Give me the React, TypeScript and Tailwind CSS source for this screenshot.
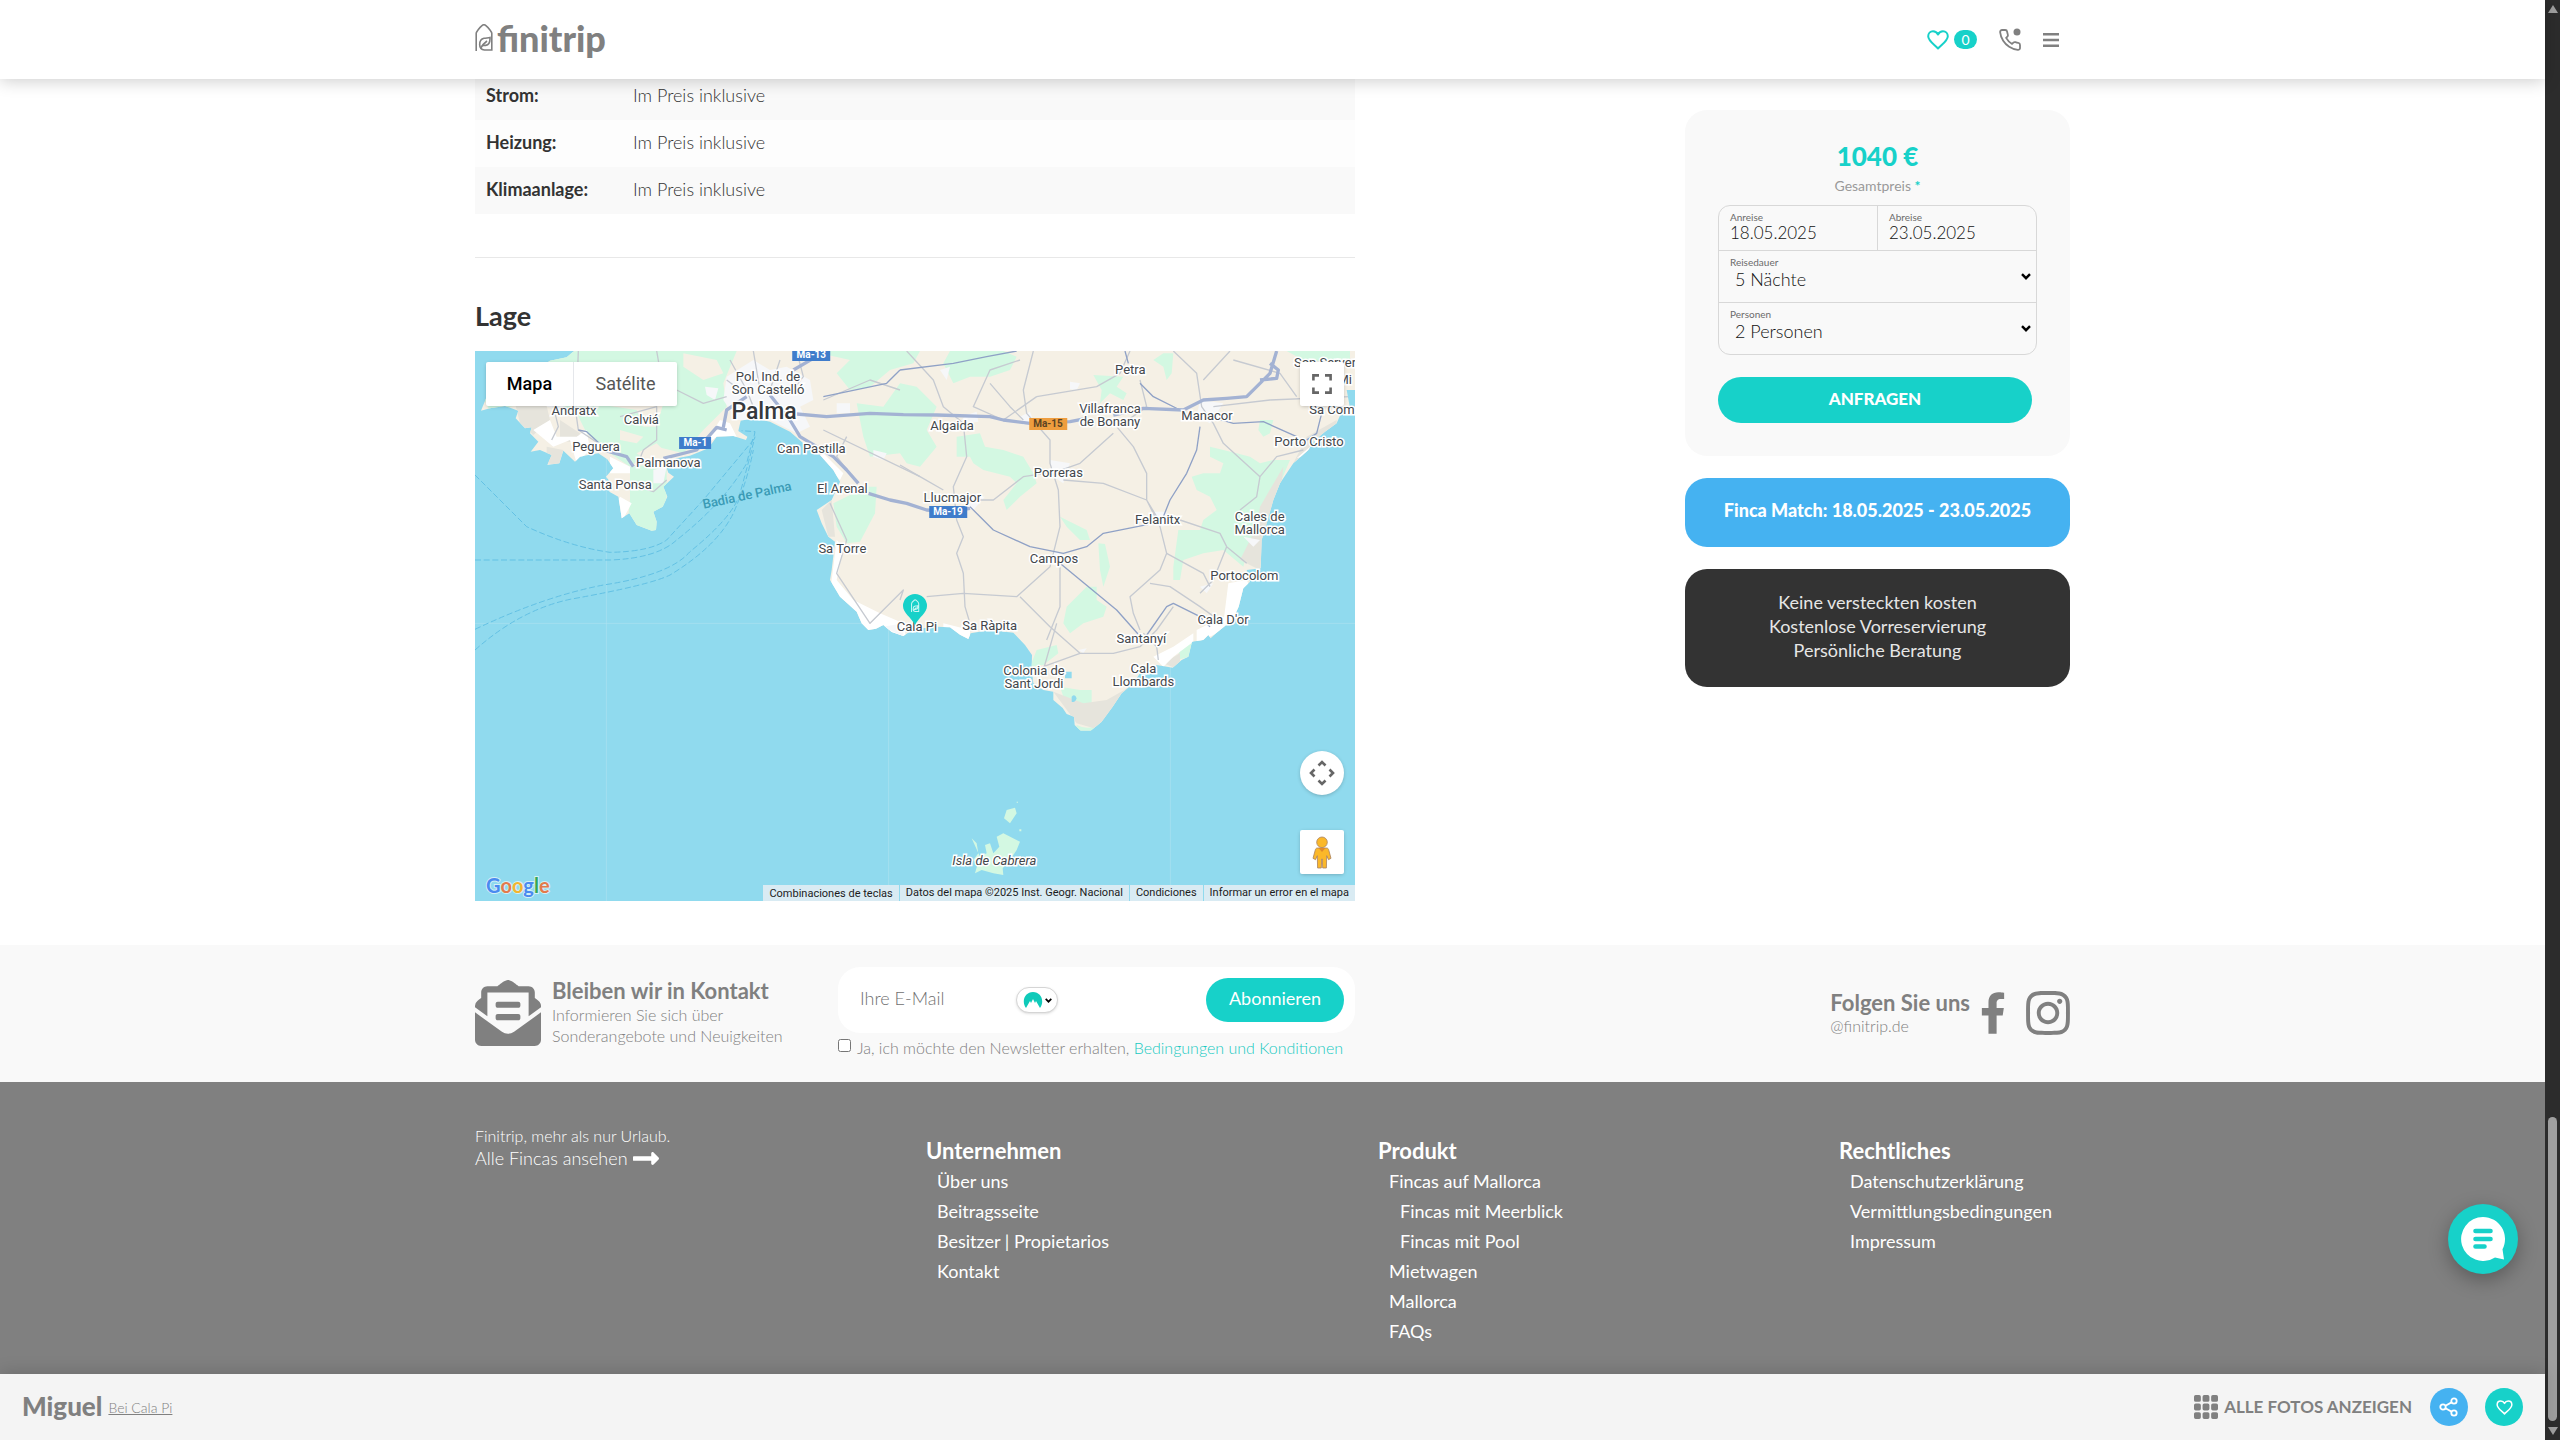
import React from "react";
import { FaEnvelopeOpenText, FaFacebookF, FaInstagram, FaLongArrowAltRight } from "react-icons/fa";
import { BsGrid3X3GapFill } from "react-icons/bs";

const HOUSE = "M1.2 27V9.2C1.2 8 4.500 3.600 7 1.600c1.200-1 2.700-1 3.900 0C13.400 3.600 16.800 8 16.800 9.200V26H9.500C2.800 25.500 3.500 15.500 9 14.300c2.200-.5 4.300-.2 6-.8.2 4.500-1.300 7.400-4.300 7.900-2 .3-3.200-.4-4.200.9m-.8 2c1.500-3.600 3.600-5.300 6.300-7.300";

function HouseMark({ className }: { className: string }) {
  return (
    <svg viewBox="0 0 18 27" className={className} fill="none" stroke="currentColor" strokeWidth="1.6" aria-hidden="true">
      <path d={HOUSE} />
    </svg>
  );
}

function Heart({ className, width = 2 }: { className: string; width?: number }) {
  return (
    <svg viewBox="0 0 22 20" className={className} fill="none" stroke="currentColor" strokeWidth={width} strokeLinejoin="round" aria-hidden="true">
      <path d="M11 18.500C7.500 14.800 1.200 10.800 1.200 6.200 1.200 3.300 3.300 1.300 6 1.300c2.200 0 4 1.200 5 3.200 1-2 2.800-3.200 5-3.200 2.700 0 4.800 2 4.800 4.900 0 4.600-6.300 8.600-9.800 12.300z" />
    </svg>
  );
}

function Header() {
  return (
    <header className="relative z-10 h-[79px] bg-white shadow-[0_2px_16px_rgba(0,0,0,0.2)]">
      <div className="mx-auto flex h-full w-[1595px] max-w-full items-center justify-between">
        <a href="#" aria-label="finitrip" className="flex items-center gap-1 pb-1 text-[#808080]">
          <HouseMark className="h-[27px] w-[18px]" />
          <span className="text-[36px] leading-[36px] font-black">finitrip</span>
        </a>
        <nav className="flex items-center text-[#808080]">
          <a href="#" aria-label="Favoriten" className="flex items-center gap-[5px] text-[#17d1c9]">
            <Heart className="h-5 w-[22px]" />
            <span className="flex h-[19px] w-[23px] items-center justify-center rounded-full bg-[#17d1c9] text-[14px] leading-none font-normal text-white">0</span>
          </a>
          <a href="#" aria-label="Telefon" className="ml-[21px]">
            <svg viewBox="0 0 24 24" className="h-6 w-6" fill="none" stroke="currentColor" strokeWidth="1.800" strokeLinejoin="round">
              <path d="M22 16.920v3a2 2 0 0 1-2.180 2 19.790 19.790 0 0 1-8.630-3.070 19.500 19.500 0 0 1-6-6 19.790 19.790 0 0 1-3.070-8.670A2 2 0 0 1 4.110 2h3a2 2 0 0 1 2 1.720 12.840 12.840 0 0 0 .7 2.810 2 2 0 0 1-.45 2.110L8.090 9.910a16 16 0 0 0 6 6l1.270-1.270a2 2 0 0 1 2.110-.45 12.840 12.840 0 0 0 2.810.7A2 2 0 0 1 22 16.920z" />
              <circle cx="19" cy="4" r="3.500" fill="currentColor" stroke="none" />
            </svg>
          </a>
          <button type="button" aria-label="Menü" className="mr-[11px] ml-[21px]">
            <svg viewBox="0 0 16 14" className="h-[14px] w-4" fill="currentColor">
              <path d="M0 0h16v2.600H0zM0 5.700h16v2.600H0zM0 11.400h16V14H0z" />
            </svg>
          </button>
        </nav>
      </div>
    </header>
  );
}

type Label = { x: number; y: number; t: string[]; kind?: "city" | "sea" | "island" | "blue" | "orange" };

const LABELS: Label[] = [
  { x: 312, y: 210, t: ["Andratx"] },
  { x: 514, y: 238, t: ["Calviá"] },
  { x: 378, y: 319, t: ["Peguera"] },
  { x: 595, y: 367, t: ["Palmanova"] },
  { x: 436, y: 433, t: ["Santa Ponsa"] },
  { x: 894, y: 129, t: ["Pol. Ind. de", "Son Castelló"] },
  { x: 882, y: 215, t: ["Palma"], kind: "city" },
  { x: 1024, y: 325, t: ["Can Pastilla"] },
  { x: 1117, y: 444, t: ["El Arenal"] },
  { x: 1117, y: 625, t: ["Sa Torre"] },
  { x: 830, y: 466, t: ["Badia de Palma"], kind: "sea" },
  { x: 1024, y: 46, t: ["Ma-13"], kind: "blue" },
  { x: 676, y: 308, t: ["Ma-1"], kind: "blue" },
  { x: 1434, y: 515, t: ["Ma-19"], kind: "blue" },
  { x: 1734, y: 253, t: ["Ma-15"], kind: "orange" },
  { x: 1446, y: 255, t: ["Algaida"] },
  { x: 1447, y: 470, t: ["Llucmajor"] },
  { x: 1981, y: 86, t: ["Petra"] },
  { x: 1920, y: 225, t: ["Villafranca", "de Bonany"] },
  { x: 2211, y: 224, t: ["Manacor"] },
  { x: 2565, y: 67, t: ["Son Server"] },
  { x: 2624, y: 118, t: ["Mi"] },
  { x: 2586, y: 207, t: ["Sa Com"] },
  { x: 2517, y: 304, t: ["Porto Cristo"] },
  { x: 1765, y: 397, t: ["Porreras"] },
  { x: 2063, y: 537, t: ["Felanitx"] },
  { x: 2369, y: 550, t: ["Cales de", "Mallorca"] },
  { x: 1752, y: 653, t: ["Campos"] },
  { x: 2323, y: 704, t: ["Portocolom"] },
  { x: 2259, y: 838, t: ["Cala D'or"] },
  { x: 1341, y: 857, t: ["Cala Pi"] },
  { x: 1559, y: 855, t: ["Sa Ràpita"] },
  { x: 2014, y: 894, t: ["Santanyí"] },
  { x: 1692, y: 1011, t: ["Colonia de", "Sant Jordi"] },
  { x: 2020, y: 1006, t: ["Cala", "Llombards"] },
  { x: 1573, y: 1560, t: ["Isla de Cabrera"], kind: "island" },
];

const LABEL_STYLE = {
  town: "text-[13px] leading-[13px] text-[#43474c] [-webkit-text-stroke:3px_#fff] [paint-order:stroke_fill]",
  city: "text-[23px] leading-[24px] font-medium text-[#35383c] [-webkit-text-stroke:3px_#fff] [paint-order:stroke_fill]",
  sea: "text-[13px] leading-[13px] font-medium text-[#3a9ab5] -rotate-12",
  island: "text-[13px] leading-[13px] italic text-[#43474c] [-webkit-text-stroke:3px_#fff] [paint-order:stroke_fill]",
  blue: "bg-[#3f7ccb] px-1 text-[10px] leading-[12px] font-bold text-white",
  orange: "bg-[#ee9d3e] px-1 text-[10px] leading-[12px] font-bold text-[#5b4322]",
};

function MapDrawing() {
  return (
    <svg viewBox="15 33 2640 1650" className="block w-full bg-[#90daee]" aria-hidden="true">
      <defs>
        <clipPath id="land">
          <path d="M312 33 290 52 240 62 150 120 50 170 33 212 60 205 105 198 145 212 137 235 165 265 185 262 180 280 205 305 182 335 210 330 245 345 232 375 268 370 280 332 315 365 330 350 355 345 385 340 412 358 430 385 408 410 420 425 418 455 445 470 450 500 455 535 478 520 500 555 545 572 558 570 560 545 550 515 578 500 592 470 580 440 612 410 595 398 585 370 620 355 660 347 715 325 740 290 790 288 828 300 832 290 805 273 812 242 850 235 900 245 960 275 1000 310 1050 345 1090 390 1110 425 1085 480 1040 510 1055 550 1075 590 1095 605 1085 690 1080 720 1110 770 1160 815 1175 850 1195 870 1218 866 1240 855 1265 876 1300 888 1330 868 1400 860 1440 862 1470 884 1495 897 1502 880 1560 870 1630 878 1665 915 1686 945 1685 985 1690 1030 1720 1050 1750 1055 1750 1080 1778 1104 1790 1122 1812 1130 1814 1155 1832 1172 1862 1172 1895 1145 1928 1100 1955 1060 1990 1030 2010 1000 2060 975 2108 983 2135 960 2155 950 2166 905 2200 900 2215 885 2222 895 2238 880 2265 858 2290 835 2306 800 2320 745 2340 725 2330 690 2372 685 2375 600 2393 540 2410 480 2430 430 2470 370 2515 330 2535 300 2565 275 2600 250 2615 215 2660 200 2660 33Z" />
        </clipPath>
      </defs>
      <g stroke="#aee2f0" strokeWidth="2">
        <path d="M409 33V1683M1256 33V1683M2101 33V1683M15 850H2655" />
      </g>
      <g fill="none" stroke="#63c1e4" strokeWidth="3" strokeDasharray="18 8">
        <path d="M15 405 170 560Q300 620 420 637 540 635 590 600L700 480 850 300 855 275 815 272" />
        <path d="M15 660H420Q560 655 620 600 760 490 830 370L850 290" />
        <path d="M15 868Q220 770 400 735 600 705 660 635 790 530 810 460 835 370 855 290" />
        <path d="M15 930Q150 810 300 778 540 735 600 705 740 620 790 520 830 430 850 330" />
      </g>
      <g clipPath="url(#land)">
        <rect x="15" y="33" width="2640" height="1200" fill="#f5f0e5" />
        <g fill="#d3f8e2">
          <path d="M30 150 240 50 320 33H800L760 130 770 200 700 270 640 340 560 320 480 380 420 340 350 280 320 220 200 180 60 215Z" />
          <path d="M1020 33H1290L1350 33 1330 70 1260 90 1200 140 1140 150 1100 100 1140 60Z" />
          <path d="M1160 190 1240 200 1290 130 1340 140 1400 200 1370 270 1400 320 1350 380 1310 370 1290 340 1200 350 1180 290Z" />
          <path d="M480 380 590 370 590 470 570 580 470 580 480 480Z" />
          <path d="M1110 480 1190 440 1220 440 1215 520 1170 605 1130 610 1100 560 1090 490Z" />
          <path d="M1440 33H1600L1640 50 1620 90 1560 110 1500 110 1450 130 1420 70Z" />
          <path d="M1870 105 1960 110 1940 140 1970 160 1960 180 1920 160 1890 190 1895 150Z" />
          <path d="M1460 290 1530 280 1545 320 1600 330 1660 350 1690 400 1700 430 1650 470 1610 510 1600 480 1640 430 1620 410 1540 390 1510 370 1500 350 1460 350Z" />
          <path d="M2220 320 2300 340 2340 350 2370 370 2410 360 2460 360 2400 500 2330 640 2320 680 2260 630 2200 640 2140 660 2130 720 2110 720 2110 680 2125 570 2190 570 2200 540 2240 510 2220 470 2180 450 2165 410 2200 400 2250 400 2260 370 2220 350Z" />
          <path d="M1770 530 1850 570 1860 600 1830 600 1790 560ZM1885 610 1905 612 1920 680 1900 740 1890 690ZM1790 800 1850 740 1880 740 1880 780 1910 800 1900 830 1840 850 1800 880 1780 850ZM1700 930 1760 915 1765 940 1720 975 1680 980Z" />
          <path d="M1770 1040 1830 1050 1865 1050 1865 1095 1830 1090 1780 1070ZM1820 1155Q1860 1175 1895 1145V1180H1820ZM2130 930 2160 900 2170 910 2160 950 2120 960Z" />
          <path d="M2370 240 2410 240 2400 280 2380 290 2365 270ZM2050 60 2080 40 2110 40 2105 100 2090 120 2080 80ZM2450 33H2640V70L2500 60Z" />
        </g>
        <g fill="#f5f0e5">
          <path d="M420 198 500 210 520 260 560 260 580 190 530 190 440 170ZM450 270 520 290 500 310 450 300ZM640 40 740 60 760 100 700 120 640 80ZM500 340 560 310 580 330 540 370Z" />
        </g>
        <g fill="#e6e4dc">
          <path d="M137 198H230L240 240 190 285 150 250ZM270 240 330 280 320 310 270 300ZM230 320 280 330 268 375 230 370ZM1055 510 1085 480 1095 590 1075 590ZM1750 1055 1840 1090 1910 1080 1980 1040 1890 1170 1820 1150ZM2370 500 2440 380 2430 480 2380 600 2370 690 2310 660 2360 560ZM2510 290 2600 240V270L2520 340 2470 370Z" />
          <path d="M2080 970 2130 940 2130 990Z" />
        </g>
        <g fill="#fff">
          <path d="M190 270 240 240 260 290 320 290 350 270 360 330 320 370 300 300 250 320ZM420 350 480 380 480 400 420 400ZM450 470 485 490 455 545 440 490ZM700 320 750 240 780 250 800 290 740 290ZM1100 600 1120 620 1100 720 1150 780 1230 820 1300 850 1310 900 1160 880 1080 760ZM1060 340 1120 400 1110 420 1040 350ZM1420 850 1500 870 1500 900 1420 870ZM2275 730 2330 720 2340 740 2300 840 2260 850ZM2050 950 2110 920 2170 880 2170 905 2110 950 2080 980ZM2180 870 2240 840 2290 820 2260 870 2180 910ZM2480 355 2520 320 2510 345Z" />
        </g>
        <g fill="#f6f7f9">
          <path d="M770 110 850 60 900 90 950 80 1020 120 1030 180 990 200 1020 260 980 280 900 240 800 240 760 180ZM240 160 280 170 280 210 230 200ZM705 140 745 145 735 180 710 165ZM550 390 590 380 580 430 550 430ZM1210 330 1250 340 1240 360 1210 350ZM1100 190H1140V220H1100ZM1410 90 1440 80 1430 120ZM1490 225 1520 215 1525 245 1460 255ZM1650 230 1680 215 1690 240 1660 255ZM1800 125 1830 130 1820 150 1800 148ZM1740 360 1800 370 1780 430 1750 410ZM1500 465 1545 470 1510 510 1480 500ZM1750 630 1790 650 1770 680 1740 670ZM2040 515 2090 515 2080 560 2050 555ZM2190 180 2260 190 2220 250 2180 230ZM1240 860 1300 850 1300 890ZM2190 740 2230 730 2210 760ZM1825 930 1850 925 1840 940ZM1940 880 2030 890 2020 910 1950 905ZM2320 590 2370 600 2350 620Z" />
        </g>
        <g fill="none" stroke="#c6cad1" strokeWidth="4" strokeLinejoin="round">
          <path d="M325 33 318 220 325 270 400 320M560 33 570 90 620 150 700 190 770 170M250 200 265 260 245 300M450 420 550 455 590 420M500 380 520 330 560 300 560 200 450 230" />
          <path d="M980 33 1000 110 960 160M780 60 830 150 850 200M850 33 870 150M770 120 830 165M900 150 930 60M1060 180 1200 120 1290 150M1060 270 1350 410M1130 290 1100 350 1140 400M1080 490 1130 600 1100 700 1200 850 1300 750 1290 780" />
          <path d="M1290 375 1350 410 1420 450M1310 33 1390 120 1420 200 1480 250 1490 350 1450 440 1460 540 1480 590 1460 640 1480 700 1485 800 1500 850" />
          <path d="M1370 770 1480 760 1640 770 1740 680 1770 560 1765 450 1740 370 1740 300 1670 220 1660 150 1690 33" />
          <path d="M1650 60 1560 90 1510 200 1600 240 1700 170M1560 130 1620 200 1660 240M1700 170 1880 140 1950 100 1980 33M1930 280 1830 370 1760 395 1660 410 1570 480 1500 480M1940 260 1990 320 2030 400 2030 480 2070 560 2090 640 2070 690 1980 770 1990 820 2010 870M1780 420 1900 430 2030 480 2060 530M2010 120 2030 200 1960 250" />
          <path d="M1650 770 1740 860 1830 940 1930 940 2010 920 2060 870 2110 800M1830 940 1720 980M1760 850 1720 990M1770 680 1770 800 1730 900M2040 730 2100 740 2190 800 2260 850M2110 33 2180 100 2195 200 2230 250 2260 310 2370 410 2360 470 2310 510M2200 120 2280 33M2230 200 2400 180 2640 170M2290 60 2430 100 2480 170M2130 540 2250 580 2270 620 2330 670M2270 620 2230 720 2190 760M2370 410 2420 350 2500 330M2020 880 2060 920 2065 960M2090 640 2200 700 2220 740" />
        </g>
        <g fill="none" stroke="#8fa1c6" strokeWidth="4" strokeLinejoin="round">
          <path d="M1290 90 1450 70 1550 50 1640 33M2010 130 2050 170 2130 210M1500 500 1570 570 1680 620 1780 640 1850 620 1900 580 2050 550 2080 530 2100 480 2150 400 2180 330 2190 260M1770 670 1940 810 2020 900 2090 800 2110 790 2190 830 2220 860M2220 230 2290 250 2380 245 2480 290M1965 33 1975 70M2560 200 2540 280 2480 320M325 270 350 275 410 330M1060 170 1250 130 1290 90" />
        </g>
        <g fill="none" stroke="#a3b2d3" strokeWidth="10" strokeLinejoin="round">
          <path d="M580 355 680 330 740 262 770 270M760 262 770 210 830 170M900 165 960 240 990 290 1090 350 1130 390 1165 430M1195 460 1260 480 1310 490 1370 510 1440 515 1500 505M980 222 1070 230 1200 220 1300 224 1400 225 1560 230 1600 240 1680 250 1800 245 1850 235M1930 225 2020 205 2140 210 2200 180 2270 175 2330 170 2400 100 2420 33M2370 120 2420 115 2425 90 2400 70M970 90 1030 55M400 330 470 350 490 380" />
        </g>
        <g fill="#90daee">
          <path d="M1785 995H1805V1015H1785ZM1805 1070Q1815 1060 1820 1075 1815 1090 1805 1085ZM2630 150H2655V205H2640Z" />
        </g>
      </g>
      <g fill="#d3f8e2">
        <path d="M1610 1410 1635 1403 1640 1420 1620 1450 1602 1435ZM1505 1495 1520 1510 1525 1540 1510 1560 1522 1575 1515 1600 1535 1590 1570 1600 1600 1605 1598 1585 1620 1560 1640 1530 1650 1505 1600 1480 1580 1490 1588 1520 1570 1540 1560 1510 1545 1515 1550 1540 1530 1550ZM1640 1385H1644V1388H1640ZM1648 1468H1654V1474H1648Z" />
      </g>
    </svg>
  );
}

const CONTROL = "absolute flex items-center justify-center bg-white shadow-[0_1px_4px_-1px_rgba(0,0,0,0.3)]";

function LocationMap() {
  return (
    <section aria-label="Karte" className="relative mt-5 overflow-hidden font-['Roboto',sans-serif] font-normal">
      <MapDrawing />
      {LABELS.map((l) => (
        <div
          key={l.t.join(" ")}
          className={`absolute -translate-x-1/2 -translate-y-1/2 text-center whitespace-nowrap ${LABEL_STYLE[l.kind ?? "town"]}`}
          style={{ left: `${(l.x - 15) / 26.4}%`, top: `${(l.y - 33) / 16.5}%` }}
        >
          {l.t.map((line) => (
            <div key={line}>{line}</div>
          ))}
        </div>
      ))}
      <svg viewBox="0 0 24 32" className="absolute top-[243px] left-[428px] h-8 w-6" aria-hidden="true">
        <path d="M12 0a12 12 0 0 1 12 12c0 7-8 11-12 19C8 23 0 19 0 12A12 12 0 0 1 12 0z" fill="#17d1c9" />
        <g transform="translate(8 5.500) scale(.46)" fill="none" stroke="#c9f6f4" strokeWidth="2.200">
          <path d={HOUSE} />
        </g>
      </svg>
      <div className="absolute top-[11px] left-[11px] flex h-11 rounded-[2px] bg-white text-[18px] shadow-[0_1px_4px_-1px_rgba(0,0,0,0.3)]">
        <button type="button" className="w-[87px] pb-0.5 font-medium text-black">Mapa</button>
        <button type="button" className="w-[104px] border-l border-gray-200 pb-0.5 text-[#565656]">Satélite</button>
      </div>
      <button type="button" aria-label="Vollbild" className={`${CONTROL} top-[11px] right-[11px] h-11 w-11 rounded-[2px]`}>
        <svg viewBox="0 0 20 20" className="h-5 w-5" fill="none" stroke="#666" strokeWidth="2.600">
          <path d="M1.400 6.500V1.400H7M13 1.400h5.600v5.100M18.600 13.500v5.100H13M7 18.600H1.400v-5.100" />
        </svg>
      </button>
      <button type="button" aria-label="Kamerasteuerung" className={`${CONTROL} right-[11px] bottom-[106px] h-11 w-11 rounded-full`}>
        <svg viewBox="0 0 26 26" className="h-[26px] w-[26px]" fill="none" stroke="#666" strokeWidth="2.600">
          <path d="m9.500 5.500 3.500-3.500 3.500 3.500M9.500 20.500l3.500 3.500 3.500-3.500M5.500 9.500 2 13l3.500 3.500M20.500 9.500 24 13l-3.500 3.500" />
        </svg>
      </button>
      <button type="button" aria-label="Street View" className={`${CONTROL} right-[11px] bottom-[27px] h-11 w-11 rounded-[2px]`}>
        <svg viewBox="0 0 20 33" className="h-[33px] w-5" fill="#fbb829" stroke="#a9825f" strokeWidth=".8">
          <path d="M5.500 12h9c1.500 0 2 1 2.300 2.300l2.200 8-2.500 1.400-1.800-4-.3 12.300h-3.700L10.300 23h-.6l-.4 9H5.600l-.3-12.300-1.800 4L1 22.300l2.200-8C3.500 13 4 12 5.500 12z" />
          <path d="m6.500 12 3.500 4 3.500-4z" fill="#e08a2c" stroke="none" />
          <circle cx="10" cy="6.300" r="5.300" />
        </svg>
      </button>
      <div className="absolute bottom-1 left-[11px] font-['Lato',sans-serif] text-[20px] leading-[24px] font-bold [-webkit-text-stroke:2px_#d5eff6] [paint-order:stroke_fill]">
        <span className="text-[#4a8af0]">G</span>
        <span className="text-[#e37a4b]">o</span>
        <span className="text-[#f2b530]">o</span>
        <span className="text-[#4a8af0]">g</span>
        <span className="text-[#34a853]">l</span>
        <span className="text-[#e37a4b]">e</span>
      </div>
      <div className="absolute right-0 bottom-0 flex h-4 gap-px text-[11px] leading-[15px] whitespace-nowrap text-[#1c1c1c]">
        <button type="button" className="bg-[#d9ebf3] px-[6px]">Combinaciones de teclas</button>
        <span className="bg-[#d9ebf3] px-[6px]">Datos del mapa ©2025 Inst. Geogr. Nacional</span>
        <a href="#" className="bg-[#d9ebf3] px-[6px]">Condiciones</a>
        <a href="#" className="bg-[#d9ebf3] px-[6px]">Informar un error en el mapa</a>
      </div>
    </section>
  );
}

function Chevron({ className }: { className: string }) {
  return (
    <svg viewBox="0 0 10 7" className={className} fill="none" stroke="#000" strokeWidth="2.400" aria-hidden="true">
      <path d="m1 1.200 4 4 4-4" />
    </svg>
  );
}

function SelectRow({ id, label, value }: { id: string; label: string; value: string }) {
  return (
    <div className="relative flex h-[52px] flex-col border-t border-[#d8d8d8] pt-1.5">
      <label htmlFor={id} className="pl-[11px] text-[10px] leading-[10px] font-normal text-[#6b6b6b]">{label}</label>
      <select id={id} className="w-full appearance-none bg-transparent pl-4 text-[18px] leading-[24px] text-[#111]">
        <option>{value}</option>
      </select>
      <Chevron className="pointer-events-none absolute top-[22px] right-[5px] h-[7px] w-[10px]" />
    </div>
  );
}

function DateField({ id, label, value }: { id: string; label: string; value: string }) {
  return (
    <div className="flex min-w-0 flex-1 flex-col pt-1.5 pl-[11px]">
      <label htmlFor={id} className="text-[10px] leading-[10px] font-normal text-[#6b6b6b]">{label}</label>
      <input id={id} defaultValue={value} className="w-full bg-transparent text-[17px] leading-[17px] text-[#111]" />
    </div>
  );
}

function Booking() {
  return (
    <aside className="mt-[37px] flex w-[385px] flex-col gap-[22px] text-center text-[17px]">
      <form className="h-[346px] rounded-[22px] bg-[#f9f9f9] px-[33px] pt-8">
        <p className="text-[26px] leading-[28px] font-black text-[#17d1c9]">1040 €</p>
        <p className="mt-2 text-[14px] leading-[16px] font-normal text-[#9a9a9a]">
          Gesamtpreis <span className="font-bold text-[#17d1c9]">*</span>
        </p>
        <div className="mt-[11px] rounded-xl border border-[#d8d8d8] text-left">
          <div className="flex h-[44px] divide-x divide-[#d8d8d8]">
            <DateField id="arrival" label="Anreise" value="18.05.2025" />
            <DateField id="departure" label="Abreise" value="23.05.2025" />
          </div>
          <SelectRow id="nights" label="Reisedauer" value="5 Nächte" />
          <SelectRow id="guests" label="Personen" value="2 Personen" />
        </div>
        <button type="button" className="mt-[22px] block h-[46px] w-[314px] rounded-full bg-[#17d1c9] pb-0.5 font-black text-white">ANFRAGEN</button>
      </form>
      <button type="button" className="h-[69px] rounded-[22px] bg-[#45b2f1] pb-1 text-[18px] font-black text-white">Finca Match: 18.05.2025 - 23.05.2025</button>
      <div className="rounded-[22px] bg-[#333] pt-[21px] pb-[25px] text-[18px] leading-[24px] font-normal text-[#e6e6e6]">
        <p>Keine versteckten kosten</p>
        <p>Kostenlose Vorreservierung</p>
        <p>Persönliche Beratung</p>
      </div>
    </aside>
  );
}

const COSTS = [
  ["Strom:", "Im Preis inklusive"],
  ["Heizung:", "Im Preis inklusive"],
  ["Klimaanlage:", "Im Preis inklusive"],
];

function Newsletter() {
  return (
    <section className="mt-11 h-[137px] bg-[#f9f9f9] text-[#808080]">
      <div className="mx-auto flex w-[1595px] max-w-full items-start">
        <FaEnvelopeOpenText className="mt-[35px] h-[66px] w-[66px] shrink-0" aria-hidden="true" />
        <div className="mt-[33px] ml-[11px] w-[286px] shrink-0">
          <h2 className="text-[22px] leading-[26px] font-bold">Bleiben wir in Kontakt</h2>
          <p className="text-[16px] leading-[21px]">
            Informieren Sie sich über
            <br />
            Sonderangebote und Neuigkeiten
          </p>
        </div>
        <form className="mt-[22px] w-[517px] shrink-0">
          <div className="flex h-[66px] items-center rounded-[22px] bg-white pr-[11px] pl-[22px]">
            <input type="email" aria-label="Ihre E-Mail" placeholder="Ihre E-Mail" className="h-11 w-[156px] bg-transparent pb-1 text-[18px] placeholder:text-[#707070]" />
            <button type="button" aria-label="Passwort-Manager" className="flex h-[26px] w-[42px] items-center justify-center gap-[2px] rounded-full border border-[#d5d5d5] bg-white shadow-sm">
              <svg viewBox="0 0 20 16" className="h-4 w-5" fill="#0fcab9" aria-hidden="true">
                <path d="M3 16C-2 9 2 0 10 0s12 9 7 16l-4-7-1 2-2-4-2 4-1-2z" />
              </svg>
              <Chevron className="h-[5px] w-[7px]" />
            </button>
            <button type="button" className="ml-auto h-11 w-[138px] rounded-full bg-[#17d1c9] pb-1 text-[18px] font-normal text-white">Abonnieren</button>
          </div>
          <div className="mt-[5px] flex items-start gap-[6px] text-[16px] leading-[20px]">
            <input id="consent" type="checkbox" className="mt-px h-[13px] w-[13px]" />
            <label htmlFor="consent" className="whitespace-nowrap">
              Ja, ich möchte den Newsletter erhalten, <a href="#" className="text-[#17c9c1]">Bedingungen und Konditionen</a>
            </label>
          </div>
        </form>
        <div className="mt-[46px] ml-auto flex items-start">
          <div className="mr-[10px]">
            <h2 className="text-[22px] leading-[23px] font-bold">Folgen Sie uns</h2>
            <p className="text-[16px] leading-[24px]">@finitrip.de</p>
          </div>
          <a href="#" aria-label="Facebook"><FaFacebookF className="h-11 w-[26px]" /></a>
          <a href="#" aria-label="Instagram" className="ml-5"><FaInstagram viewBox="0 31 448 450" className="h-11 w-11" /></a>
        </div>
      </div>
    </section>
  );
}

const FOOTER: { title: string; links: [string, boolean?][] }[] = [
  { title: "Unternehmen", links: [["Über uns"], ["Beitragsseite"], ["Besitzer | Propietarios"], ["Kontakt"]] },
  {
    title: "Produkt",
    links: [["Fincas auf Mallorca"], ["Fincas mit Meerblick", true], ["Fincas mit Pool", true], ["Mietwagen"], ["Mallorca"], ["FAQs"]],
  },
  { title: "Rechtliches", links: [["Datenschutzerklärung"], ["Vermittlungsbedingungen"], ["Impressum"]] },
];

function Footer() {
  return (
    <footer className="h-[292px] bg-[#808080] text-white">
      <div className="mx-auto grid w-[1595px] max-w-full grid-cols-[451fr_452fr_461fr_231fr]">
        <div className="pt-11">
          <p className="text-[16px] leading-[20px]">Finitrip, mehr als nur Urlaub.</p>
          <a href="#" className="flex items-center gap-[5px] text-[18px] leading-[24px]">
            Alle Fincas ansehen
            <FaLongArrowAltRight viewBox="0 110 448 292" className="h-[17px] w-[26px]" aria-hidden="true" />
          </a>
        </div>
        {FOOTER.map((col) => (
          <nav key={col.title} className="pt-[54px]" aria-label={col.title}>
            <h2 className="text-[22px] leading-[30px] font-bold">{col.title}</h2>
            <ul className="pl-[11px] text-[18px] leading-[30px] font-normal whitespace-nowrap">
              {col.links.map(([text, sub]) => (
                <li key={text} className={sub ? "pl-[11px]" : ""}>
                  <a href="#">{text}</a>
                </li>
              ))}
            </ul>
          </nav>
        ))}
      </div>
    </footer>
  );
}

function BottomBar() {
  return (
    <div className="relative flex h-[66px] items-center bg-[#f4f4f4] pr-[22px] pl-[22px] text-[#808080] shadow-[0_-2px_16px_rgba(0,0,0,0.15)]">
      <strong className="pb-0.5 text-[26px] leading-[30px] font-black">Miguel</strong>
      <a href="#" className="ml-[6px] text-[14px] underline">Bei Cala Pi</a>
      <button type="button" className="ml-auto flex items-center gap-[6px] text-[17px] font-bold">
        <BsGrid3X3GapFill viewBox="1 1 14 14" className="h-6 w-6" aria-hidden="true" />
        ALLE FOTOS ANZEIGEN
      </button>
      <button type="button" aria-label="Teilen" className="ml-[18px] flex h-[38px] w-[38px] items-center justify-center rounded-full bg-[#45b2f1] text-white">
        <svg viewBox="0 0 20 20" className="h-5 w-5" fill="none" stroke="currentColor" strokeWidth="1.800">
          <circle cx="4" cy="10" r="2.700" />
          <circle cx="15" cy="4" r="2.700" />
          <circle cx="15" cy="16" r="2.700" />
          <path d="m6.500 8.700 6-3.300M6.500 11.300l6 3.300" />
        </svg>
      </button>
      <button type="button" aria-label="Merken" className="ml-[17px] flex h-[38px] w-[38px] items-center justify-center rounded-full bg-[#17d1c9] text-white">
        <Heart className="h-[15px] w-[17px]" />
      </button>
    </div>
  );
}

export default function App() {
  return (
    <div className="flex min-h-screen overflow-hidden bg-white font-['Lato',sans-serif] font-light text-[#333]">
      <div className="relative min-w-0 flex-1">
        <Header />
        <main className="mx-auto -mt-[6px] flex w-[1595px] max-w-full items-start justify-between">
          <div className="w-[880px]">
            <table className="w-full text-[18px]">
              <tbody>
                {COSTS.map(([name, value], i) => (
                  <tr key={name} className={i % 2 ? "h-[47px] bg-[#fdfdfd]" : "h-[47px] bg-[#f9f9f9]"}>
                    <th scope="row" className="w-[158px] pb-0.5 pl-[11px] text-left font-bold">{name}</th>
                    <td className="pb-0.5">{value}</td>
                  </tr>
                ))}
              </tbody>
            </table>
            <hr className="mt-[43px] border-[#e8e8e8]" />
            <h2 className="mt-[43px] text-[27px] leading-[30px] font-bold">Lage</h2>
            <LocationMap />
          </div>
          <Booking />
        </main>
        <Newsletter />
        <Footer />
        <BottomBar />
        <button type="button" aria-label="Chat" className="absolute right-[27px] bottom-[166px] flex h-[70px] w-[70px] items-center justify-center rounded-full bg-[#17d1c9] shadow-[0_6px_20px_rgba(0,0,0,0.3)]">
          <svg viewBox="0 0 44 44" className="h-11 w-11" fill="none">
            <path d="M22 0a22 22 0 0 1 19.500 32.200L43 42.500l-9-2A22 22 0 1 1 22 0z" fill="#fff" />
            <path d="M14.500 14h15M14.500 22h15M14.500 29.500h9" stroke="#17d1c9" strokeWidth="4.600" strokeLinecap="round" />
          </svg>
        </button>
      </div>
      <div className="flex w-[15px] shrink-0 flex-col items-center justify-between bg-[#2c2c2c] py-[5px]" aria-hidden="true">
        <svg viewBox="0 0 10 8" className="h-2 w-[10px]" fill="#9f9f9f"><path d="M5 0 10 8H0z" /></svg>
        <div className="mt-auto mb-[6px] h-[304px] w-[9px] rounded-full bg-[#9f9f9f]" />
        <svg viewBox="0 0 10 8" className="h-2 w-[10px]" fill="#9f9f9f"><path d="M0 0h10L5 8z" /></svg>
      </div>
    </div>
  );
}
